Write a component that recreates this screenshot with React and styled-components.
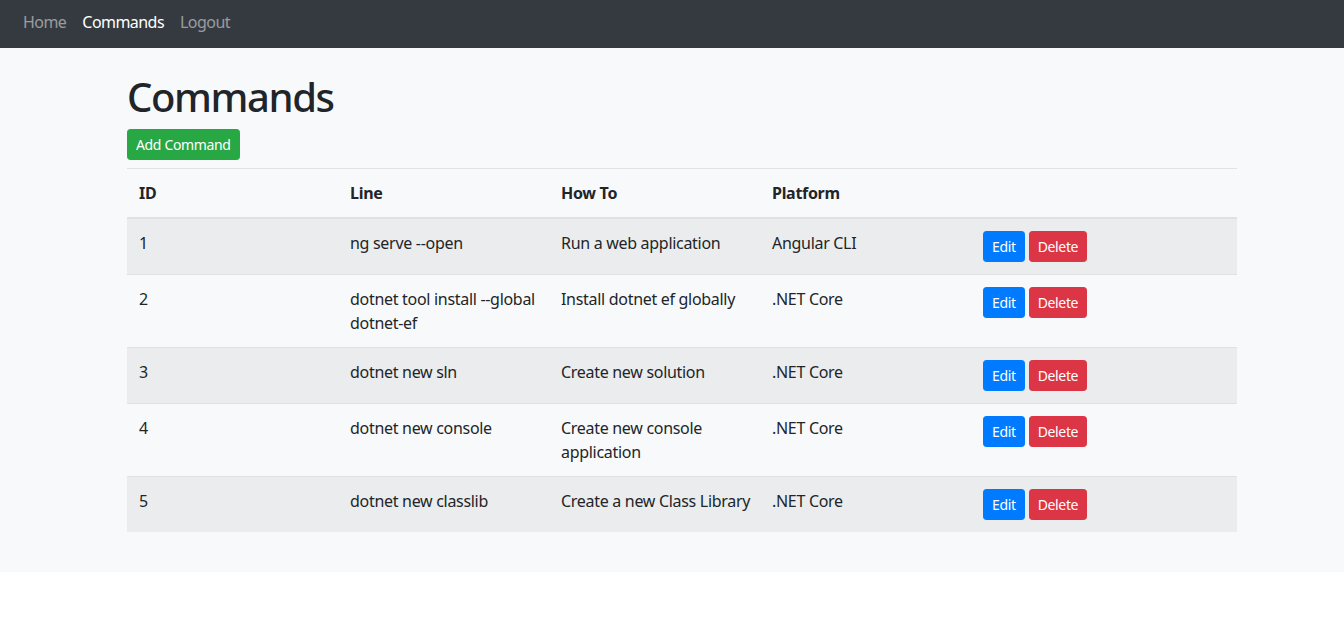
import React from "react";
import styled, { createGlobalStyle } from "styled-components";

const commands = [
  { id: 1, line: "ng serve --open", howTo: "Run a web application", platform: "Angular CLI" },
  { id: 2, line: "dotnet tool install --global dotnet-ef", howTo: "Install dotnet ef globally", platform: ".NET Core" },
  { id: 3, line: "dotnet new sln", howTo: "Create new solution", platform: ".NET Core" },
  { id: 4, line: "dotnet new console", howTo: "Create new console application", platform: ".NET Core" },
  { id: 5, line: "dotnet new classlib", howTo: "Create a new Class Library", platform: ".NET Core" },
];

const GlobalStyle = createGlobalStyle`
  * {
    box-sizing: border-box;
  }
  body {
    margin: 0;
    background: #ffffff;
    color: #212529;
    font-family: "Noto Sans", "Open Sans", sans-serif;
    font-size: 16px;
    line-height: 1.5;
    letter-spacing: -0.3px;
  }
`;

const Navbar = styled.nav`
  height: 48px;
  background-color: #343a40;
  display: flex;
  align-items: center;
  padding: 0 15px;
`;

const NavLink = styled.a`
  padding: 4px 8px;
  font-size: 16px;
  line-height: 24px;
  margin-top: -5px;
  letter-spacing: -0.55px;
  text-decoration: none;
  color: ${(p) => (p.$active ? "#ffffff" : "rgba(255, 255, 255, 0.5)")};
  cursor: pointer;
`;

const Main = styled.main`
  background-color: #f8f9fa;
  padding: 25px 0 40px;
`;

const Container = styled.div`
  width: 1110px;
  margin-left: calc(50% - 545px);
`;

const Title = styled.h1`
  margin: 0 0 8px;
  font-size: 40px;
  font-weight: 500;
  line-height: 48px;
  letter-spacing: -1.4px;
  color: #212529;
`;

const Button = styled.button`
  display: inline-block;
  border: 1px solid ${(p) => p.$color};
  background-color: ${(p) => p.$color};
  color: #ffffff;
  font-family: inherit;
  font-size: 14px;
  line-height: 21px;
  letter-spacing: -0.35px;
  padding: 4px 8px;
  border-radius: 3.2px;
  cursor: pointer;
`;

const Table = styled.table`
  width: 100%;
  margin-top: 8px;
  border-collapse: collapse;
  table-layout: fixed;
  color: #212529;

  th,
  td {
    padding: 12px 6px 12px 12px;
    vertical-align: top;
    text-align: left;
    border-top: 1px solid #dee2e6;
  }

  th {
    font-weight: 700;
    border-bottom: 2px solid #dee2e6;
  }

  tbody tr:nth-of-type(odd) {
    background-color: rgba(0, 0, 0, 0.05);
  }
`;

const Col = styled.th`
  width: ${(p) => p.$width || "auto"};
`;

const Actions = styled.div`
  display: flex;
  gap: 4px;
`;

export default function App() {
  return (
    <>
      <GlobalStyle />
      <Navbar>
        <NavLink>Home</NavLink>
        <NavLink $active>Commands</NavLink>
        <NavLink>Logout</NavLink>
      </Navbar>
      <Main>
        <Container>
          <Title>Commands</Title>
          <Button $color="#28a745">Add Command</Button>
          <Table>
            <thead>
              <tr>
                <Col $width="211px">ID</Col>
                <Col $width="211px">Line</Col>
                <Col $width="211px">How To</Col>
                <Col $width="211px">Platform</Col>
                <Col />
              </tr>
            </thead>
            <tbody>
              {commands.map((c) => (
                <tr key={c.id}>
                  <td>{c.id}</td>
                  <td>{c.line}</td>
                  <td>{c.howTo}</td>
                  <td>{c.platform}</td>
                  <td>
                    <Actions>
                      <Button $color="#007bff">Edit</Button>
                      <Button $color="#dc3545">Delete</Button>
                    </Actions>
                  </td>
                </tr>
              ))}
            </tbody>
          </Table>
        </Container>
      </Main>
    </>
  );
}
